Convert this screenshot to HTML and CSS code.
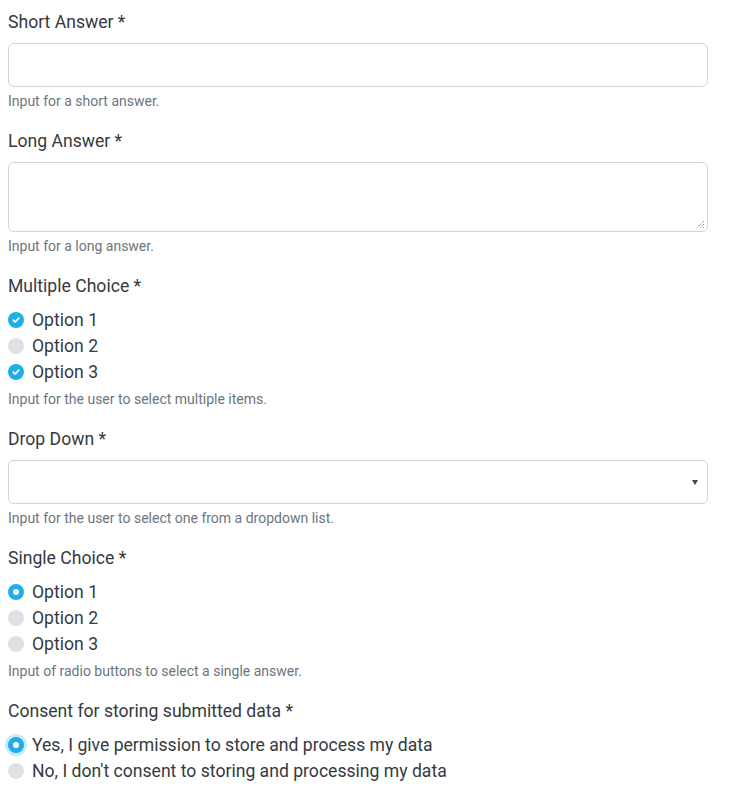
FILE: index.html
```html
<!DOCTYPE html>
<html>
<head>
<meta charset="utf-8">
<link rel="stylesheet" href="styles.css">
</head>
<body>
<form class="form">
  <div class="group">
    <label class="label">Short Answer *</label>
    <div class="input"></div>
    <div class="help">Input for a short answer.</div>
  </div>
  <div class="group">
    <label class="label">Long Answer *</label>
    <div class="input textarea">
      <svg class="grip" width="9" height="9" viewBox="0 0 9 9"><path d="M8 1L1 8M8 4L4 8M8 7L7 8" stroke="#777" stroke-width="1" stroke-dasharray="1 1" fill="none"/></svg>
    </div>
    <div class="help">Input for a long answer.</div>
  </div>
  <div class="group">
    <label class="label">Multiple Choice *</label>
    <div class="opts">
      <div class="opt"><span class="box on"><svg width="10" height="10" viewBox="0 0 10 10"><path d="M2.3 5.2L4.2 7L7.8 3.2" stroke="#fff" stroke-width="1.8" fill="none" stroke-linecap="round" stroke-linejoin="round"/></svg></span>Option 1</div>
      <div class="opt"><span class="box"></span>Option 2</div>
      <div class="opt"><span class="box on"><svg width="10" height="10" viewBox="0 0 10 10"><path d="M2.3 5.2L4.2 7L7.8 3.2" stroke="#fff" stroke-width="1.8" fill="none" stroke-linecap="round" stroke-linejoin="round"/></svg></span>Option 3</div>
    </div>
    <div class="help">Input for the user to select multiple items.</div>
  </div>
  <div class="group">
    <label class="label">Drop Down *</label>
    <div class="input select"><span class="caret"></span></div>
    <div class="help">Input for the user to select one from a dropdown list.</div>
  </div>
  <div class="group">
    <label class="label">Single Choice *</label>
    <div class="opts">
      <div class="opt"><span class="box on radio"></span>Option 1</div>
      <div class="opt"><span class="box"></span>Option 2</div>
      <div class="opt"><span class="box"></span>Option 3</div>
    </div>
    <div class="help">Input of radio buttons to select a single answer.</div>
  </div>
  <div class="group last">
    <label class="label">Consent for storing submitted data *</label>
    <div class="opts">
      <div class="opt"><span class="box on radio focus"></span>Yes, I give permission to store and process my data</div>
      <div class="opt"><span class="box"></span>No, I don't consent to storing and processing my data</div>
    </div>
  </div>
</form>
</body>
</html>
```
FILE: styles.css
```css
html, body {
  margin: 0;
  background: #fff;
}
body {
  padding: 9px 8px 8px;
  font-family: Roboto, "Liberation Sans", sans-serif;
  color: #333;
}
.form {
  width: 700px;
}
.group {
  margin-bottom: 16px;
}
.label {
  display: block;
  font-size: 17.6px;
  line-height: 26px;
  margin-bottom: 8px;
  color: #343a40;
}
.input {
  box-sizing: border-box;
  height: 44px;
  border: 1px solid #ced4da;
  border-radius: 6px;
  background: #fff;
  position: relative;
}
.textarea {
  height: 70px;
}
.grip {
  position: absolute;
  right: 2px;
  bottom: 2px;
}
.select {
  height: 44px;
}
.caret {
  position: absolute;
  right: 9px;
  top: 19px;
  width: 0;
  height: 0;
  border-left: 3px solid transparent;
  border-right: 3px solid transparent;
  border-top: 5px solid #444;
}
.help {
  font-size: 14px;
  line-height: 21px;
  color: #6c757d;
  margin-top: 4px;
}
.opts {
  display: flex;
  flex-direction: column;
}
.opt {
  display: flex;
  align-items: center;
  font-size: 17.6px;
  line-height: 26px;
  color: #343a40;
}
.box {
  box-sizing: border-box;
  width: 16px;
  height: 16px;
  border-radius: 50%;
  background: #dee2e6;
  margin-right: 8px;
  display: flex;
  align-items: center;
  justify-content: center;
  flex: none;
}
.box.on {
  background: #1eaee9;
}
.box.radio::after {
  content: "";
  width: 6px;
  height: 6px;
  border-radius: 50%;
  background: #fff;
}
.box.focus {
  box-shadow: 0 0 0 3px rgba(30, 174, 233, 0.25);
}
```
